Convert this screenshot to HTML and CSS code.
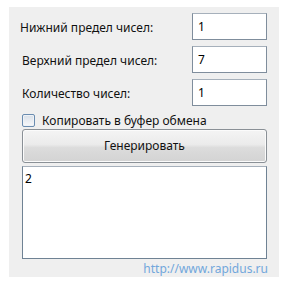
FILE: index.html
```html
<!DOCTYPE html>
<html lang="ru">
<head>
    <meta charset="UTF-8">
    <title>Генератор случайных чисел</title>
    <link rel="stylesheet" href="styles.css">
</head>
<body>
    <div class="panel">
        <div class="fields">
            <label class="field-label field-label--first" for="min">Нижний предел чисел:</label>
            <input class="field-input" type="text" id="min" value="1">
            <label class="field-label" for="max">Верхний предел чисел:</label>
            <input class="field-input" type="text" id="max" value="7">
            <label class="field-label" for="count">Количество чисел:</label>
            <input class="field-input" type="text" id="count" value="1">
        </div>
        <label class="copy-row">
            <span class="check"></span>
            Копировать в буфер обмена
        </label>
        <button class="generate">Генерировать</button>
        <div class="result">2</div>
        <a class="site-link" href="#">http://www.rapidus.ru</a>
    </div>
</body>
</html>
```

FILE: styles.css
```css
* {
    margin: 0;
    padding: 0;
    box-sizing: border-box;
}
body {
    background: #fff;
    font-family: "Noto Sans", "Liberation Sans", sans-serif;
    font-size: 12px;
    color: #111;
}
.panel {
    margin: 7px 0 0 9px;
    width: 270px;
    height: 270px;
    background: #efefef;
    padding: 6px 12px 0 13px;
    display: flex;
    flex-direction: column;
}
.fields {
    display: grid;
    grid-template-columns: 1fr 75px;
    row-gap: 6px;
    align-items: center;
}
.field-label {
    padding-top: 1px;
}
.field-label--first {
    margin-left: -2px;
}
.field-input {
    height: 27px;
    border: 1px solid #7f8d9c;
    border-top-color: #a6b0bb;
    background: #fff;
    font: inherit;
    color: #000;
    padding: 0 5px;
    outline: none;
}
.copy-row {
    display: flex;
    align-items: center;
    gap: 7px;
    margin-top: 7px;
    height: 14px;
}
.check {
    width: 13px;
    height: 13px;
    border: 1px solid #6a8cb0;
    border-radius: 2px;
    background: linear-gradient(#d8dfe8, #f7f8fa);
    box-shadow: inset 0 0 0 1px #eef2f6;
}
.generate {
    margin-top: 2px;
    height: 35px;
    border: 1px solid #8a9096;
    border-radius: 3px;
    background: linear-gradient(#f4f4f4 0%, #ebebeb 45%, #dcdcdc 55%, #d3d3d3 100%);
    font: inherit;
    color: #111;
    box-shadow: inset 0 0 0 1px #fbfbfb;
}
.result {
    margin-top: 3px;
    height: 96px;
    border: 1px solid #6f8294;
    border-top-color: #a6b0bb;
    background: #fff;
    padding: 3px 2px;
    color: #000;
}
.site-link {
    align-self: flex-end;
    margin-top: 1px;
    margin-right: -1px;
    color: #72a7dc;
    text-decoration: none;
    font-size: 12px;
}
```
